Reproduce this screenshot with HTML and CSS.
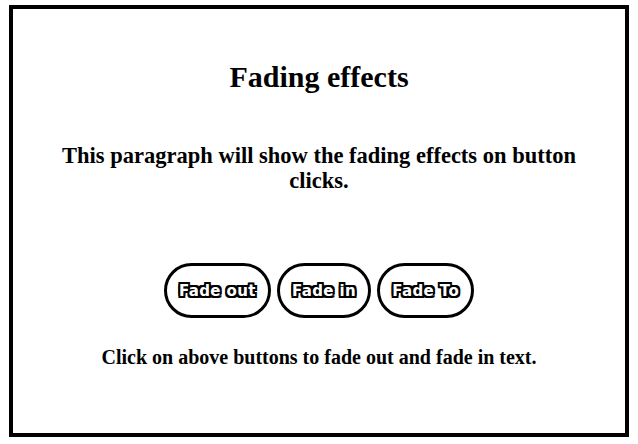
FILE: index.html
```html
<!DOCTYPE html>
<html>
<head>
<meta charset="utf-8">
<link rel="stylesheet" href="styles.css">
</head>
<body>
<div class="frame">
  <h1 class="title">Fading effects</h1>
  <p class="lead">This paragraph will show the fading effects on button clicks.</p>
  <div class="buttons">
    <button class="btn">Fade out</button>
    <button class="btn">Fade in</button>
    <button class="btn">Fade To</button>
  </div>
  <p class="note">Click on above buttons to fade out and fade in text.</p>
</div>
</body>
</html>
```

FILE: styles.css
```css
html, body {
  margin: 0;
  padding: 0;
  background: #fff;
}
body {
  font-family: "Liberation Serif", "Times New Roman", serif;
  color: #000;
}
.frame {
  box-sizing: border-box;
  margin: 5px 0 0 9px;
  width: 620px;
  height: 432px;
  border: 4px solid #000;
  text-align: center;
  padding: 0 40px;
}
.title {
  margin: 51px 0 0;
  font-size: 30px;
  font-weight: bold;
  line-height: 34px;
}
.lead {
  margin: 49px 0 0;
  font-size: 22.5px;
  font-weight: bold;
  line-height: 25px;
}
.buttons {
  display: flex;
  justify-content: center;
  gap: 6px;
  margin-top: 70px;
}
.btn {
  box-sizing: border-box;
  height: 55px;
  padding: 0 12px;
  border: 3px solid #000;
  border-radius: 28px;
  background: #fff;
  color: #fff;
  font-family: "DejaVu Sans", sans-serif;
  font-weight: bold;
  font-size: 15px;
  letter-spacing: 0.4px;
  text-shadow: 2px 0 0 #000, -2px 0 0 #000, 0 2px 0 #000, 0 -2px 0 #000,
    2px 2px 0 #000, -2px -2px 0 #000, 2px -2px 0 #000, -2px 2px 0 #000;
}
.note {
  margin: 27px 0 0;
  font-size: 20px;
  font-weight: bold;
  line-height: 24px;
}
```
